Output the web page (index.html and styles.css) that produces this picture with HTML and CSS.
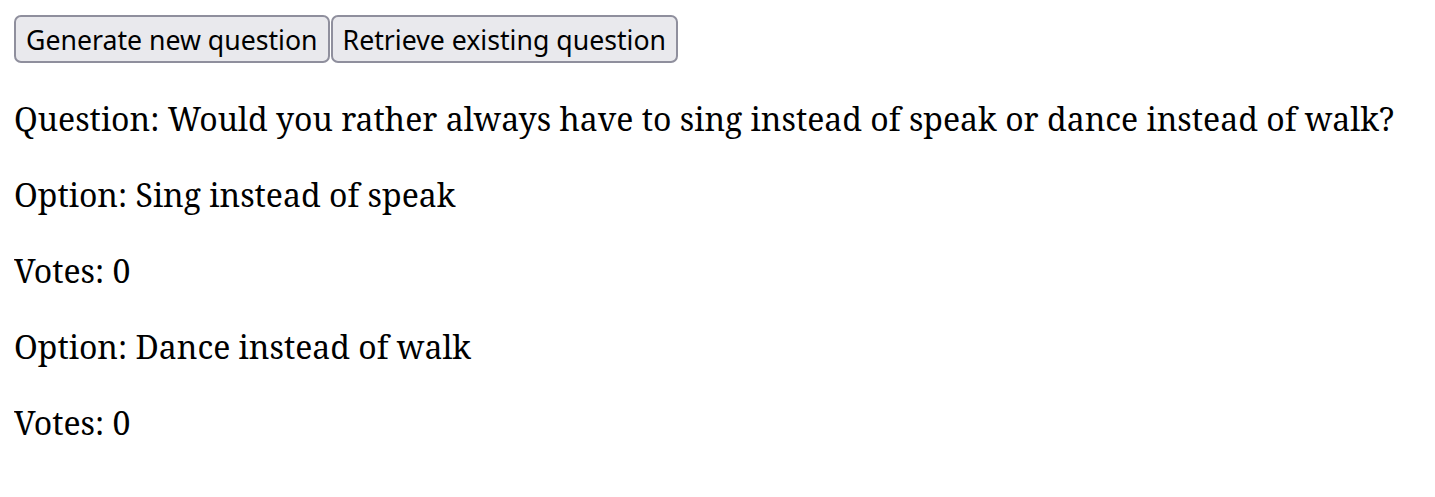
FILE: index.html
```html
<!DOCTYPE html>
<html>
<head>
<meta charset="utf-8">
<link rel="stylesheet" href="styles.css">
</head>
<body>
<div class="actions"><button class="btn">Generate new question</button><button class="btn">Retrieve existing question</button></div>
<p class="line">Question: Would you rather always have to sing instead of speak or dance instead of walk?</p>
<p class="line">Option: Sing instead of speak</p>
<p class="line">Votes: 0</p>
<p class="line">Option: Dance instead of walk</p>
<p class="line">Votes: 0</p>
</body>
</html>
```
FILE: styles.css
```css
html, body {
  background: #ffffff;
}
body {
  margin: 14px;
  font-family: "Noto Serif", "DejaVu Serif", serif;
  font-size: 32px;
  color: #000000;
}
.actions {
  display: flex;
  gap: 1px;
  margin-top: 1px;
  margin-bottom: 34px;
}
.btn {
  font-family: "Noto Sans", sans-serif;
  font-size: 26.67px;
  color: #000000;
  background: #e9e9ed;
  border: 2px solid #8f8f9d;
  border-radius: 7px;
  height: 48px;
  padding: 0 10px;
  margin: 0;
}
.line {
  margin: 32px 0;
  line-height: 44px;
}
```
